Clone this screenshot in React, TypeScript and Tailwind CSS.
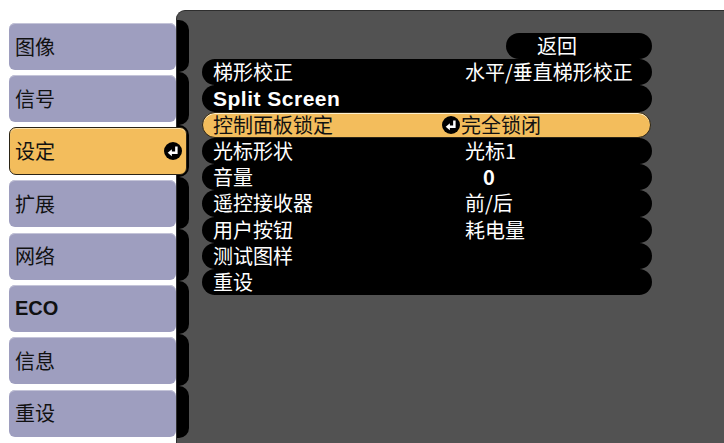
import type { ReactNode } from "react";

const FONT = { fontFamily: '"Noto Sans CJK SC", "Liberation Sans", sans-serif' };

const TABS = ["图像", "信号", "设定", "扩展", "网络", "ECO", "信息", "重设"];
const ACTIVE_TAB = 2;

type Row = { label: string; value?: string; bold?: boolean; selected?: boolean; valueClass?: string };

const ROWS: Row[] = [
  { label: "梯形校正", value: "水平/垂直梯形校正" },
  { label: "Split Screen", bold: true },
  { label: "控制面板锁定", value: "完全锁闭", selected: true },
  { label: "光标形状", value: "光标1" },
  { label: "音量", value: "0", valueClass: "pl-[18px] font-bold" },
  { label: "遥控接收器", value: "前/后" },
  { label: "用户按钮", value: "耗电量" },
  { label: "测试图样" },
  { label: "重设" },
];

function EnterIcon({ size }: { size: number }) {
  return (
    <svg width={size} height={size} viewBox="0 0 16 16" className="shrink-0">
      <circle cx="8" cy="8" r="8" fill="#000" />
      <path d="M11 4V9.6H6" stroke="#fff" strokeWidth="2.2" fill="none" />
      <path d="M3.3 9.6L7 6.5V12.7Z" fill="#fff" />
    </svg>
  );
}

function Pill({ children, className }: { children: ReactNode; className: string }) {
  return <div className={`h-[26.25px] rounded-full flex items-center ${className}`}>{children}</div>;
}

export default function App() {
  return (
    <div className="w-[724px] h-[443px] bg-white flex overflow-hidden text-[20px] leading-none" style={FONT}>
      {/* menu tabs */}
      <div className="w-[176px] shrink-0 pt-[23px] pl-[9px] flex flex-col gap-[5.3px] relative z-10">
        {TABS.map((t, i) =>
          i === ACTIVE_TAB ? (
            <div
              key={t}
              className="h-[48px] w-[178px] -mt-[0.5px] rounded-[7px] bg-[#f3bd5c] border border-[#2b2416] shadow-[inset_0_1px_0_#fbe3b0] flex items-center justify-between pl-[5px] pr-[4px] text-[#111]"
            >
              <span>{t}</span>
              <EnterIcon size={18} />
            </div>
          ) : (
            <div
              key={t}
              className={`h-[47px] w-[167px] rounded-[6px] bg-[#9e9ebf] shadow-[inset_0_1px_0_#c4c4d8] flex items-center pl-[6px] text-[#111] ${t === "ECO" ? "font-bold font-['Liberation_Sans'] text-[20px]" : ""}`}
            >
              {t}
            </div>
          )
        )}
      </div>

      {/* settings panel */}
      <div className="flex-1 mt-[10px] bg-[#525252] rounded-tl-[9px] border-t border-l border-[#2e2e2e] flex">
        <div className="w-[12px] shrink-0 pt-[9px] flex flex-col">
          {TABS.map((t) => (
            <div key={t} className="h-[52.3px] bg-black rounded-r-[10px]" />
          ))}
        </div>

        <div className="ml-[13px] mt-[21.75px] w-[450px] flex flex-col self-start">
          <div className="flex justify-end">
            <Pill className="w-[146px] bg-black text-white pl-[31px]">返回</Pill>
          </div>
          {/* black fill behind the middle of the rows; the pills draw the scalloped ends */}
          <div className="flex flex-col bg-black bg-clip-content px-[12px]">
            {ROWS.map((r) =>
              r.selected ? (
                <Pill
                  key={r.label}
                  className="-mx-[12px] bg-[#f3bd5c] text-[#111] pl-[11px] border border-[#2b2416] shadow-[inset_0_1px_0_#fdf0cf] mr-[-11px]"
                >
                  <span className="w-[252px] -ml-px shrink-0">{r.label}</span>
                  <span className="flex items-center -ml-[23px] gap-[1px]">
                    <EnterIcon size={18} />
                    <span>{r.value}</span>
                  </span>
                </Pill>
              ) : (
                <Pill key={r.label} className="-mx-[12px] bg-black text-white pl-[11px]">
                  <span
                    className={`w-[252px] shrink-0 ${r.bold ? "font-bold font-['Liberation_Sans'] text-[21px] tracking-[0.5px]" : ""}`}
                  >
                    {r.label}
                  </span>
                  {r.value && <span className={r.valueClass ?? ""}>{r.value}</span>}
                </Pill>
              )
            )}
          </div>
        </div>
      </div>
    </div>
  );
}
